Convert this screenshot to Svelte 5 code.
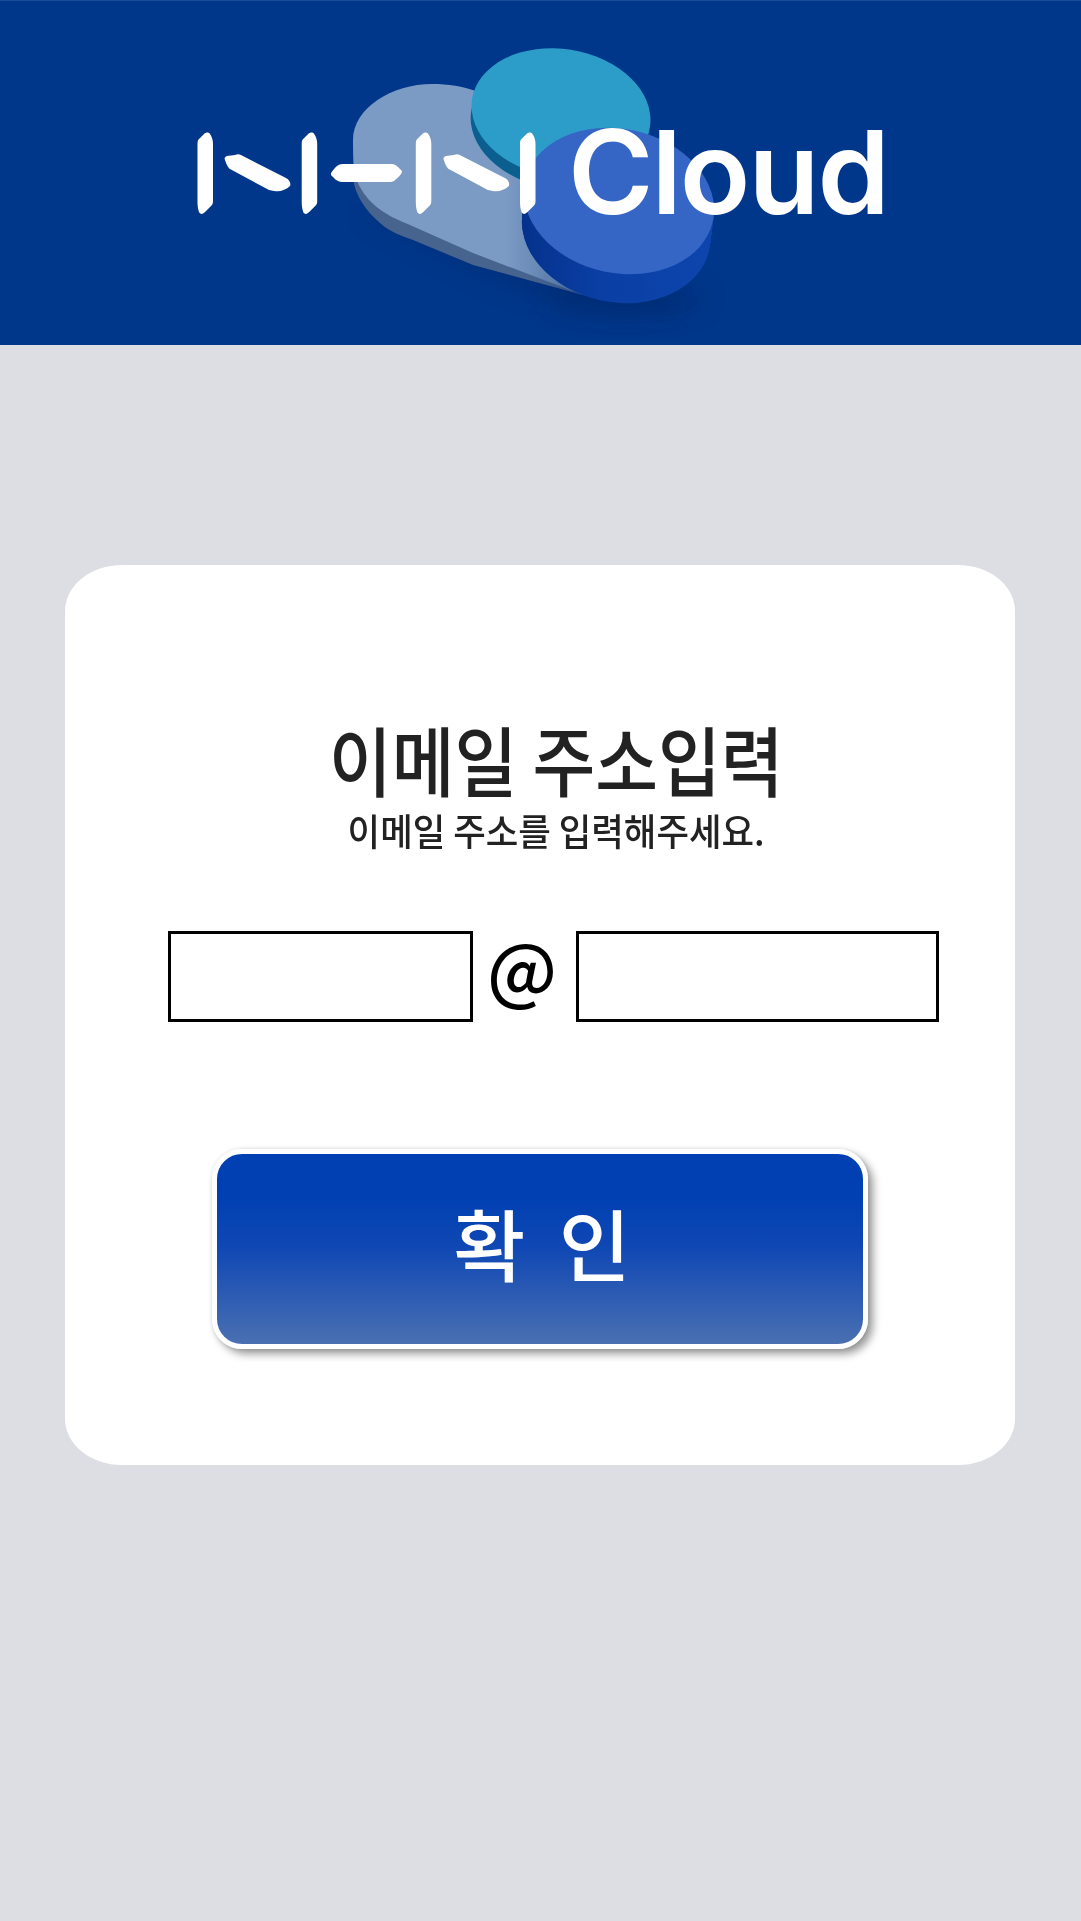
<script>
  let localPart = $state('');
  let domain = $state('');
  const blueSteps = Array.from({ length: 29 }, (_, i) => 29 - i);
</script>

<div class="page">
  <header class="top">
    <svg class="logo" viewBox="0 0 1081 345" width="1081" height="345" role="img" aria-label="NHN Cloud">
      <defs>
        <filter id="soft" x="-30%" y="-60%" width="160%" height="220%"><feGaussianBlur stdDeviation="12" /></filter>
        <linearGradient id="blobTop" x1="353" x2="600" y1="0" y2="0" gradientUnits="userSpaceOnUse">
          <stop offset="0.62" stop-color="#7b9ac4" />
          <stop offset="0.78" stop-color="#6486b2" />
          <stop offset="1" stop-color="#5f80ae" />
        </linearGradient>
        <linearGradient id="blueSide" x1="520" x2="715" y1="0" y2="0" gradientUnits="userSpaceOnUse">
          <stop offset="0" stop-color="#04308a" />
          <stop offset="0.5" stop-color="#0a3fa4" />
          <stop offset="1" stop-color="#0d45ad" />
        </linearGradient>
      </defs>
      <path d="M365 215 L480 275 L585 312 L680 312 L640 250 L400 190 Z" fill="#00276a" opacity="0.4" filter="url(#soft)" />
      <path d="M353 150 L353 178 C355 195 365 210 380 223 C390 232 402 236 413 240 L473 265 L583 295 L600 200 Z" fill="#47648f" />
      <path d="M353 140 C353 108 392 84 432 84 C465 84 490 94 510 110 L600 240 L583 295 L473 253 L410 225 C385 215 370 205 360 187 C355 178 353 165 353 140 Z" fill="url(#blobTop)" />
      <g transform="rotate(9 561 113)">
        <ellipse cx="562" cy="125" rx="90" ry="64" fill="#0a5f8f" />
        <ellipse cx="561" cy="113" rx="90" ry="64" fill="#2c9dc8" />
      </g>
      <ellipse cx="625" cy="298" rx="80" ry="18" fill="#00276a" opacity="0.4" filter="url(#soft)" />
      {#each blueSteps as s}
        <ellipse cx={619 - s * 0.1} cy={201 + s} rx={96 - s * 0.03} ry="72" transform="rotate(12 {619 - s * 0.1} {201 + s})" fill="url(#blueSide)" />
      {/each}
      <ellipse cx="619" cy="201" rx="96" ry="72" transform="rotate(12 619 201)" fill="#3566c6" />
      <g fill="#fff">
        <path id="bar" d="M197.5 144 C197.5 141 198 140 199 139 L204 134 C206 132 209 132 210 134 C212 137 213 140 213 144 L213 201 C213 204 212 205 211 206 L205 212 C202 215 200 214 199 212 C198 209 197.5 206 197.5 202 Z" />
        <use href="#bar" x="104.2" />
        <use href="#bar" x="218.3" />
        <use href="#bar" x="322.5" />
        <path id="diag" d="M225 160 C224 158 225 157 227 156 L235 155 C237 154 239 154 241 155 L286 178 C290 180 291 184 290 186 C286 190 280 192 274 191 C272 191 271 190 269 190 L230 169 C228 168 226 163 225 160 Z" />
        <use href="#diag" x="218.8" />
        <path d="M331 173 C334 169 337 164 343 164 L392 164 C396 164 399 168 402 171 C402 174 398 178 394 181 C392 182 390 182 388 182 L342 182 C337 182 334 178 331 175 Z" />
      </g>
      <text class="cloud" x="568" y="214">Cloud</text>
    </svg>
  </header>

  <main class="main">
    <section class="card">
      <h1 class="title"><span>이메일 주소입력</span></h1>
      <p class="sub"><span>이메일 주소를 입력해주세요.</span></p>
      <div class="row">
        <input class="field left" bind:value={localPart} aria-label="이메일 아이디" />
        <span class="at">@</span>
        <input class="field right" bind:value={domain} aria-label="이메일 도메인" />
      </div>
      <button class="ok" type="button">확 인</button>
    </section>
  </main>
</div>

<style>
  :global(body) {
    margin: 0;
    background: #dddee3;
  }
  .page {
    width: 1081px;
    height: 1921px;
    overflow: hidden;
    background: #dddee3;
    font-family: "Noto Sans CJK KR", "Noto Sans", sans-serif;
  }
  .top {
    height: 345px;
    background: #00378a;
    border-top: 1px solid #1a4c98;
    box-sizing: border-box;
  }
  .logo {
    display: block;
    margin-top: -1px;
  }
  .cloud {
    font-family: "Inter", sans-serif;
    font-weight: 600;
    font-size: 116px;
    letter-spacing: -2px;
    fill: #fff;
  }
  .main {
    padding: 220px 66px 0 65px;
  }
  .card {
    height: 900px;
    background: #fff;
    border-radius: 57px / 46px;
    display: flex;
    flex-direction: column;
    align-items: center;
    box-sizing: border-box;
    padding-top: 145px;
  }
  .title {
    margin: 0 0 0 32px;
    font-size: 76px;
    font-weight: 500;
    line-height: 96px;
    color: #222;
    white-space: nowrap;
  }
  .title span,
  .sub span,
  .at {
    display: inline-block;
  }
  .title span {
    transform: scaleX(0.897);
  }
  .sub {
    margin: 0 0 0 32px;
    font-size: 37px;
    font-weight: 500;
    line-height: 48px;
    color: #222;
    white-space: nowrap;
  }
  .sub span {
    transform: scaleX(0.956);
  }
  .row {
    align-self: flex-start;
    margin: 77px 0 0 103px;
    display: flex;
    align-items: center;
    width: 771px;
  }
  .field {
    height: 91px;
    box-sizing: border-box;
    border: 3px solid #000;
    border-radius: 0;
    background: #fff;
    padding: 0;
    outline: none;
  }
  .left {
    width: 305px;
  }
  .right {
    width: 363px;
  }
  .at {
    width: 103px;
    height: 91px;
    margin: -11px 0 11px;
    text-indent: -5px;
    text-align: center;
    font-size: 72px;
    font-weight: 500;
    line-height: 91px;
    color: #000;
  }
  .ok {
    margin-top: 127px;
    width: 656px;
    height: 200px;
    box-sizing: border-box;
    border: 5px solid #fff;
    border-radius: 30px;
    background: linear-gradient(#0040b2 0%, #0040b2 22%, #1048b4 50%, #4a70b2 100%);
    box-shadow: 0 0 4px rgba(0, 0, 0, 0.1), 5px 5px 9px rgba(0, 0, 0, 0.4);
    color: #fff;
    font-family: inherit;
    font-size: 78px;
    font-weight: 500;
    letter-spacing: 8px;
    padding: 0 0 14px 12px;
  }
</style>
